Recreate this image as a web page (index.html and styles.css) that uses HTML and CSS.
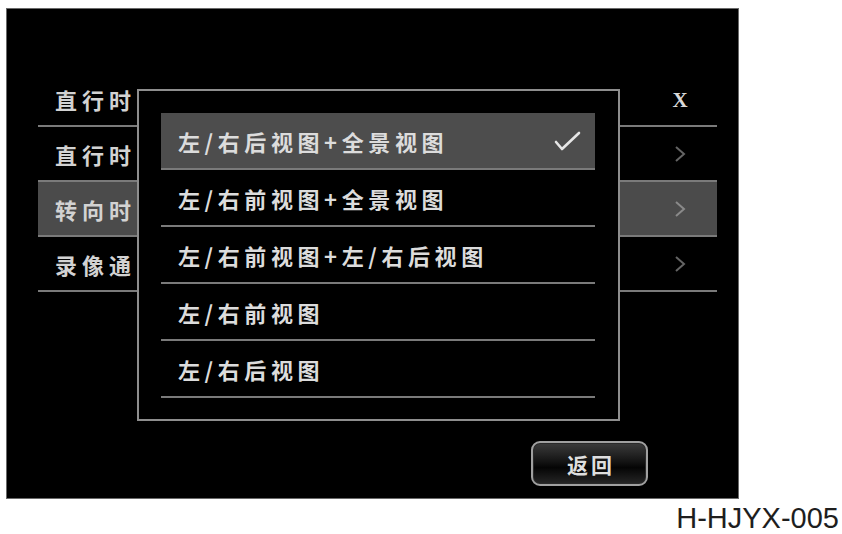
FILE: index.html
```html
<!DOCTYPE html>
<html lang="zh-CN">
<head>
<meta charset="utf-8">
<title>视图设置</title>
<link rel="stylesheet" href="styles.css">
</head>
<body>
<div class="screen">
  <div class="menu">
    <div class="row">
      <span class="label">直行时</span>
      <span class="value x">X</span>
    </div>
    <div class="row">
      <span class="label">直行时</span>
      <span class="value"><svg class="chev" width="12" height="18" viewBox="0 0 12 18"><polyline points="2,2 10,9 2,16" fill="none" stroke="currentColor" stroke-width="2"/></svg></span>
    </div>
    <div class="row selected">
      <span class="label">转向时</span>
      <span class="value"><svg class="chev" width="12" height="18" viewBox="0 0 12 18"><polyline points="2,2 10,9 2,16" fill="none" stroke="currentColor" stroke-width="2"/></svg></span>
    </div>
    <div class="row">
      <span class="label">录像通</span>
      <span class="value"><svg class="chev" width="12" height="18" viewBox="0 0 12 18"><polyline points="2,2 10,9 2,16" fill="none" stroke="currentColor" stroke-width="2"/></svg></span>
    </div>
  </div>

  <div class="popup">
    <div class="opt selected">
      <span>左/右后视图+全景视图</span>
      <svg class="check" width="27" height="20" viewBox="0 0 27 20"><polyline points="2,11 8,18 25,2" fill="none" stroke="#e6e6e6" stroke-width="2.6" stroke-linecap="round" stroke-linejoin="round"/></svg>
    </div>
    <div class="opt"><span>左/右前视图+全景视图</span></div>
    <div class="opt"><span>左/右前视图+左/右后视图</span></div>
    <div class="opt"><span>左/右前视图</span></div>
    <div class="opt"><span>左/右后视图</span></div>
  </div>

  <div class="footer">
    <div class="btn">返回</div>
  </div>
</div>
<div class="caption">H-HJYX-005</div>
</body>
</html>
```

FILE: styles.css
```css
html, body {
  margin: 0;
  padding: 0;
  background: #ffffff;
}

body {
  width: 842px;
  height: 534px;
  overflow: hidden;
  font-family: "Noto Sans CJK SC", "Noto Sans", sans-serif;
}

.screen {
  position: relative;
  box-sizing: border-box;
  width: 733px;
  height: 491px;
  margin: 8px 0 0 6px;
  background: #000;
  border: 1px solid #6a6a6a;
  display: flex;
  flex-direction: column;
}

.menu {
  margin: 63px 21px 0 31px;
}

.row {
  box-sizing: border-box;
  height: 55px;
  border-bottom: 2px solid #7a7a7a;
  display: flex;
  align-items: center;
  justify-content: space-between;
  padding: 0 22px 0 17px;
}

.row.selected {
  background: #4b4b4b;
}

.label {
  font-size: 22px;
  font-weight: 700;
  letter-spacing: 5px;
  color: #d2d2d2;
}

.value {
  width: 30px;
  display: flex;
  justify-content: center;
  align-items: center;
  color: #646464;
}

.row.selected .value {
  color: #8a8a8a;
}

.value.x {
  font-family: "Liberation Serif", "DejaVu Serif", serif;
  font-weight: 700;
  font-size: 21px;
  color: #d8d8d8;
  margin-top: 3px;
}

.popup {
  position: absolute;
  left: 130px;
  top: 80px;
  box-sizing: border-box;
  width: 483px;
  height: 332px;
  background: #000;
  border: 2px solid #8e8e8e;
  padding: 22px 23px 0 22px;
}

.opt {
  box-sizing: border-box;
  height: 57px;
  border-bottom: 2px solid #7a7a7a;
  display: flex;
  align-items: center;
  justify-content: space-between;
  padding: 0 14px 0 17px;
  font-size: 22px;
  font-weight: 700;
  letter-spacing: 4.6px;
  color: #dcdcdc;
}

.opt.selected {
  background: #4d4d4d;
}

.footer {
  margin-top: auto;
  display: flex;
  justify-content: flex-end;
  padding: 0 90px 12px 0;
}

.btn {
  box-sizing: border-box;
  width: 117px;
  height: 45px;
  border: 2px solid #a0a0a0;
  border-radius: 9px;
  background: linear-gradient(#3c3c3c 0%, #141414 45%, #050505 60%, #262626 100%);
  box-shadow: inset 0 0 0 1px #2a2a2a;
  color: #dedede;
  font-size: 21px;
  font-weight: 700;
  letter-spacing: 3px;
  display: flex;
  align-items: center;
  justify-content: center;
  padding-left: 3px;
}

.caption {
  margin-top: 5px;
  padding-right: 3px;
  text-align: right;
  font-family: "Liberation Sans", Arial, sans-serif;
  font-size: 29px;
  line-height: 29px;
  color: #1e1e1e;
}
```
